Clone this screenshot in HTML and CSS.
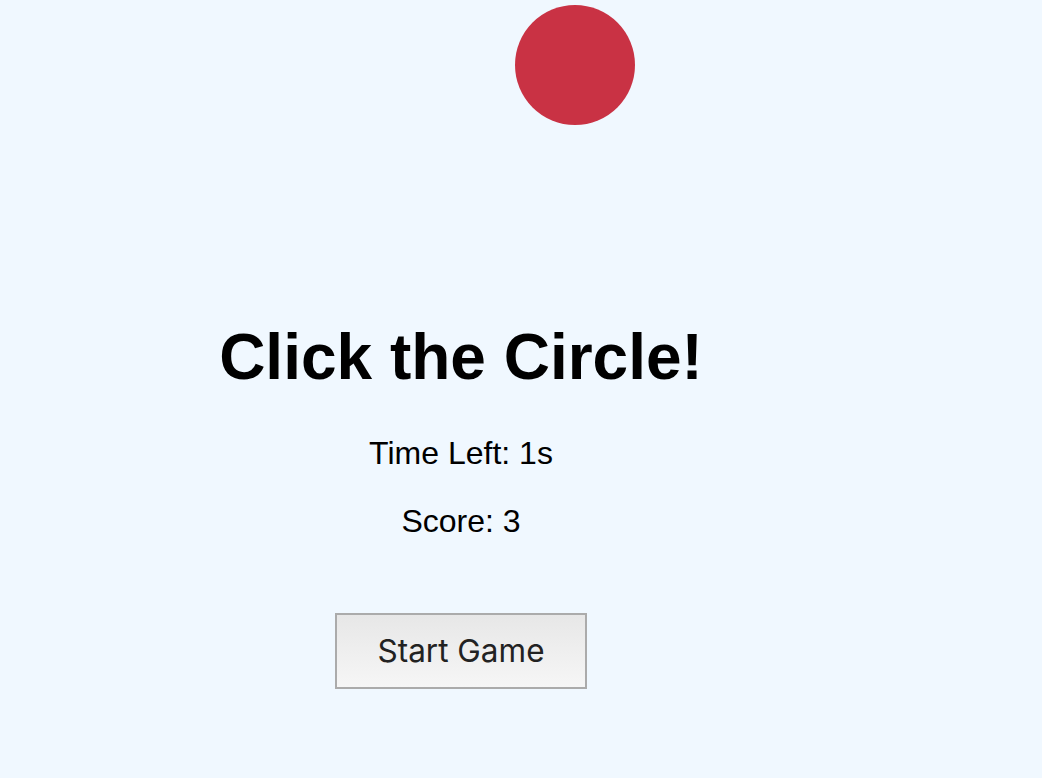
FILE: index.html
```html
<!DOCTYPE html>
<html lang="en">
<head>
<meta charset="utf-8">
<title>Click the Circle</title>
<link rel="stylesheet" href="styles.css">
</head>
<body>
<div class="circle"></div>
<main class="stage">
  <h1 class="title">Click the Circle!</h1>
  <p class="stat stat-time">Time Left: 1s</p>
  <p class="stat stat-score">Score: 3</p>
  <button class="start-btn" type="button">Start Game</button>
</main>
</body>
</html>
```
FILE: styles.css
```css
html, body {
  margin: 0;
  padding: 0;
  background: #f0f8ff;
  height: 100%;
}
body {
  position: relative;
  overflow: hidden;
  font-family: "Liberation Sans", Arial, sans-serif;
  color: #000;
}
.stage {
  display: flex;
  flex-direction: column;
  align-items: center;
  padding: 320px 120px 0 0;
}
.title {
  margin: 0 0 41px;
  font-size: 64px;
  font-weight: 700;
  line-height: 74px;
}
.stat {
  margin: 0;
  font-size: 32px;
  line-height: 37px;
}
.stat-score {
  margin-top: 31px;
}
.start-btn {
  margin-top: 73px;
  font-family: "Inter", "Noto Sans", sans-serif;
  font-size: 31.5px;
  line-height: 40px;
  color: #222;
  padding: 16px 40px;
  border: 2px solid #ababab;
  border-radius: 0;
  background: linear-gradient(#e7e7e7, #f6f6f6);
}
.circle {
  position: absolute;
  left: 515px;
  top: 5px;
  width: 120px;
  height: 120px;
  border-radius: 50%;
  background: #c93244;
}
```
